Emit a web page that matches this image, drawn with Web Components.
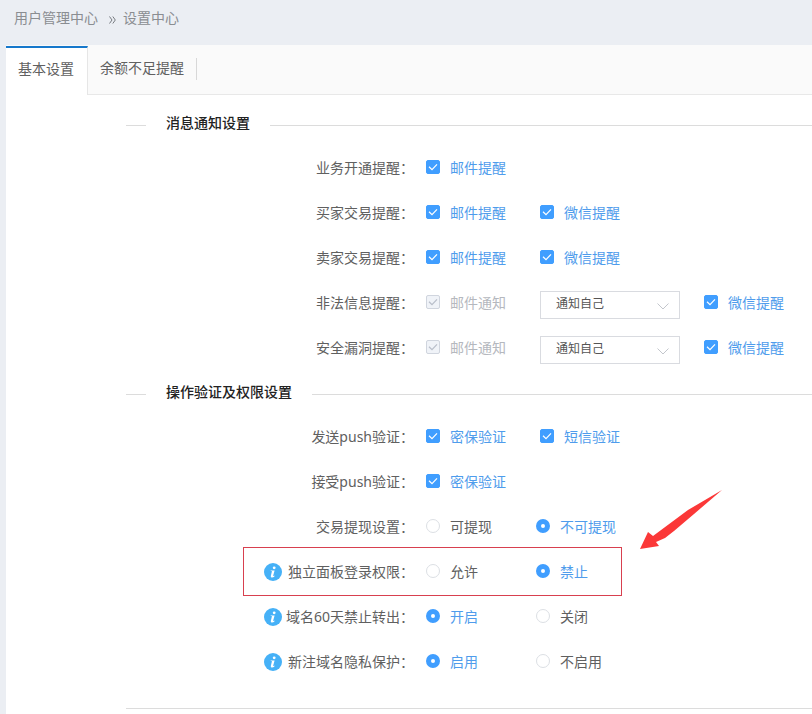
<!DOCTYPE html>
<html lang="zh-CN">
<head>
<meta charset="utf-8">
<meta name="viewport" content="width=device-width, initial-scale=1">
<title>设置中心</title>
<style>
  html { --blue: #409eff; --link: #4f9cec; --text: #606060; --line: #dcdcdc; }
  body {
    margin: 0; min-height: 100vh; background: #ebeef3; color: var(--text);
    font: 14px/20px "Noto Sans", "Noto Sans CJK SC", sans-serif;
  }
</style>
</head>
<body>
<settings-page>
  <bread-crumb slot="crumbs" parent="用户管理中心" current="设置中心"></bread-crumb>
  <tab-strip slot="tabs" tabs="基本设置,余额不足提醒"></tab-strip>

  <settings-section heading="消息通知设置">
    <setting-row label="业务开通提醒："><check-option text="邮件提醒" checked></check-option></setting-row>
    <setting-row label="买家交易提醒："><check-option text="邮件提醒" checked></check-option><check-option text="微信提醒" checked></check-option></setting-row>
    <setting-row label="卖家交易提醒："><check-option text="邮件提醒" checked></check-option><check-option text="微信提醒" checked></check-option></setting-row>
    <setting-row label="非法信息提醒："><check-option text="邮件通知" checked disabled></check-option><drop-down label="非法信息通知对象" options="通知自己,通知客户"></drop-down><check-option text="微信提醒" checked></check-option></setting-row>
    <setting-row label="安全漏洞提醒："><check-option text="邮件通知" checked disabled></check-option><drop-down label="安全漏洞通知对象" options="通知自己,通知客户"></drop-down><check-option text="微信提醒" checked></check-option></setting-row>
  </settings-section>

  <settings-section heading="操作验证及权限设置">
    <setting-row label="发送push验证："><check-option text="密保验证" checked></check-option><check-option text="短信验证" checked></check-option></setting-row>
    <setting-row label="接受push验证："><check-option text="密保验证" checked></check-option></setting-row>
    <setting-row label="交易提现设置："><radio-options label="交易提现设置" options="可提现,不可提现" selected="1"></radio-options></setting-row>
    <setting-row label="独立面板登录权限：" info marked><radio-options label="独立面板登录权限" options="允许,禁止" selected="1"></radio-options></setting-row>
    <setting-row label="域名60天禁止转出：" info><radio-options label="域名60天禁止转出" options="开启,关闭" selected="0"></radio-options></setting-row>
    <setting-row label="新注域名隐私保护：" info><radio-options label="新注域名隐私保护" options="启用,不启用" selected="0"></radio-options></setting-row>
  </settings-section>
</settings-page>

<script>
class Base extends HTMLElement {
  connectedCallback() {
    if (this.shadowRoot) return;
    this.attachShadow({ mode: "open" }).innerHTML = this.render();
  }
  attr(name) { return this.getAttribute(name) || ""; }
  list(name) { return this.attr(name).split(","); }
}

customElements.define("settings-page", class extends Base {
  render() {
    return `<style>
      :host { display: flex; flex-direction: column; min-height: 100vh; }
      main { flex: 1; margin-left: 6px; background: #fff; }
      .content { padding: 6px 0 0 120px; }
      hr { border: 0; border-top: 1px solid var(--line); margin: 24px 0 0; }
    </style>
    <slot name="crumbs"></slot>
    <main><slot name="tabs"></slot><div class="content"><slot></slot><hr></div></main>`;
  }
});

customElements.define("bread-crumb", class extends Base {
  render() {
    return `<style>
      :host { display: block; color: #8a8d91; }
      nav { display: flex; align-items: center; height: 36px; padding: 0 14px 9px; }
      a { color: inherit; text-decoration: none; }
      svg { width: 7px; height: 8px; margin: 3px 7px 0 11px; fill: none; stroke: #777b80; }
    </style>
    <nav aria-label="位置"><a href="#">${this.attr("parent")}</a>
      <svg viewBox="0 0 7 8" aria-hidden="true"><path d="M.5.5 3 4 .5 7.5M3.8.5 6.3 4 3.8 7.5"/></svg>
      <span>${this.attr("current")}</span></nav>`;
  }
});

customElements.define("tab-strip", class extends Base {
  render() {
    return `<style>
      :host { display: block; }
      [role=tablist] { display: flex; align-items: flex-end; height: 49px; background: #fafafa; border-bottom: 1px solid #e8e8e8; }
      button { font: inherit; color: inherit; border: 0; background: none; height: 48px; padding: 0 12px 4px; margin: 0; }
      button[aria-selected=true] { box-sizing: border-box; height: 49px; margin-bottom: -1px; background: #fff; border-top: 2px solid #1678cb; border-right: 1px solid #e6e6e6; padding: 0 13px 5px 12px; }
      i { width: 1px; height: 22px; margin-bottom: 14px; background: #d8d8d8; }
    </style>
    <div role="tablist">${this.list("tabs").map((t, n) =>
      `<button role="tab" aria-selected="${n === 0}">${t}</button>${n ? "<i></i>" : ""}`).join("")}</div>`;
  }
});

customElements.define("settings-section", class extends Base {
  render() {
    return `<style>
      :host { display: block; }
      h2 { display: flex; align-items: center; gap: 20px; box-sizing: border-box; height: 44px; margin: 0; padding-bottom: 3px; font-size: 14px; line-height: 20px; font-weight: 500; font-family: "Noto Sans CJK SC", sans-serif; color: #222; }
      h2::before, h2::after { content: ""; height: 1px; margin-top: 8px; background: var(--line); }
      h2::before { width: 20px; }
      h2::after { flex: 1; }
    </style>
    <section><h2>${this.attr("heading")}</h2><slot></slot></section>`;
  }
});

customElements.define("setting-row", class extends Base {
  render() {
    const info = this.hasAttribute("info") ? `<svg class="info" viewBox="0 0 18 18" aria-hidden="true">
      <circle cx="9" cy="9" r="9" fill="#46b1f7"/><circle cx="10.2" cy="4.8" r="1.4" fill="#fff"/>
      <path d="M6.8 7.4h3.8l-1.4 5.2q-.1.6.4.5l1-.5-.2.8q-1.1 1-2.4 1-1.5 0-1.2-1.5l1.1-4.3q.1-.5-.4-.5h-.9z" fill="#fff"/></svg>` : "";
    const mark = this.hasAttribute("marked") ? `<div class="box"></div>
      <svg class="arrow" viewBox="0 0 82 60" aria-hidden="true"><path d="M82 0 48 20 13 46 8 42 0 59 19 56 16 52 25 48 34 41 54 24Z" fill="#fb3838"/></svg>` : "";
    return `<style>
      :host { display: block; position: relative; margin-left: 138px; }
      .row { display: grid; grid-template-columns: 18px 132px 1fr; align-items: center; height: 45px; }
      .info { width: 18px; height: 18px; }
      .label { grid-column: 2; text-align: right; white-space: nowrap; }
      .controls { display: flex; align-items: center; padding-left: 12px; }
      .box { position: absolute; left: -21px; top: -2px; width: 377px; height: 47px; border: 1px solid #d8404f; pointer-events: none; }
      .arrow { position: absolute; left: 376px; top: -59px; width: 82px; height: 60px; pointer-events: none; }
    </style>
    <div class="row">${info}<span class="label">${this.attr("label")}</span><div class="controls"><slot></slot></div></div>${mark}`;
  }
});

customElements.define("check-option", class extends Base {
  render() {
    const off = this.hasAttribute("disabled");
    return `<style>
      :host { display: block; width: 114px; flex: none; }
      :host(:last-child) { width: auto; }
      label { display: flex; align-items: center; gap: 10px; color: ${off ? "#b5b8be" : "var(--link)"}; white-space: nowrap; }
      .tick { display: grid; width: 14px; height: 14px; margin-bottom: 2px; }
      input, svg { grid-area: 1 / 1; width: 14px; height: 14px; margin: 0; }
      input { appearance: none; box-sizing: border-box; border: 1px solid #d0d5de; border-radius: 2px; background: #f0f3f8; }
      input:checked:enabled { background: var(--blue); border-color: var(--blue); }
      svg { pointer-events: none; fill: none; stroke: ${off ? "#b8bec9" : "#fff"}; stroke-width: 1.2; }
      input:not(:checked) + svg { display: none; }
    </style>
    <label><span class="tick"><input type="checkbox" ${this.hasAttribute("checked") ? "checked" : ""} ${off ? "disabled" : ""}>
      <svg viewBox="0 0 14 14" aria-hidden="true"><path d="M3 6.800 6 9.700 11 4.300"/></svg></span>${this.attr("text")}</label>`;
  }
});

customElements.define("radio-options", class extends Base {
  render() {
    return `<style>
      :host { display: block; }
      div { display: grid; grid-template-columns: 110px auto; }
      label { display: flex; align-items: center; gap: 10px; white-space: nowrap; }
      label:has(:checked) { color: var(--link); }
      input { appearance: none; box-sizing: border-box; width: 14px; height: 14px; margin: 0 0 2px; border: 1px solid #dcdfe4; border-radius: 50%; background: #fff; }
      input:checked { border: 5px solid var(--blue); }
    </style>
    <div role="radiogroup" aria-label="${this.attr("label")}">${this.list("options").map((o, n) =>
      `<label><input type="radio" name="choice" ${String(n) === this.attr("selected") ? "checked" : ""}>${o}</label>`).join("")}</div>`;
  }
});

customElements.define("drop-down", class extends Base {
  render() {
    return `<style>
      :host { display: grid; width: 140px; margin: 4px 24px 0 0; flex: none; }
      select { grid-area: 1 / 1; appearance: none; box-sizing: border-box; width: 100%; height: 28px; margin: 0; padding: 0 32px 2px 15px; border: 1px solid #d9dbe0; border-radius: 0; background: #fff; color: #555; font: 12px/20px "Noto Sans", "Noto Sans CJK SC", sans-serif; }
      svg { grid-area: 1 / 1; place-self: center end; width: 12px; height: 7px; margin: 4px 11px 0 0; fill: none; stroke: #c3c6cc; pointer-events: none; }
    </style>
    <select aria-label="${this.attr("label")}">${this.list("options").map(o => `<option>${o}</option>`).join("")}</select>
    <svg viewBox="0 0 12 7" aria-hidden="true"><path d="M.5.5 6 6 11.500.5"/></svg>`;
  }
});
</script>
</body>
</html>
